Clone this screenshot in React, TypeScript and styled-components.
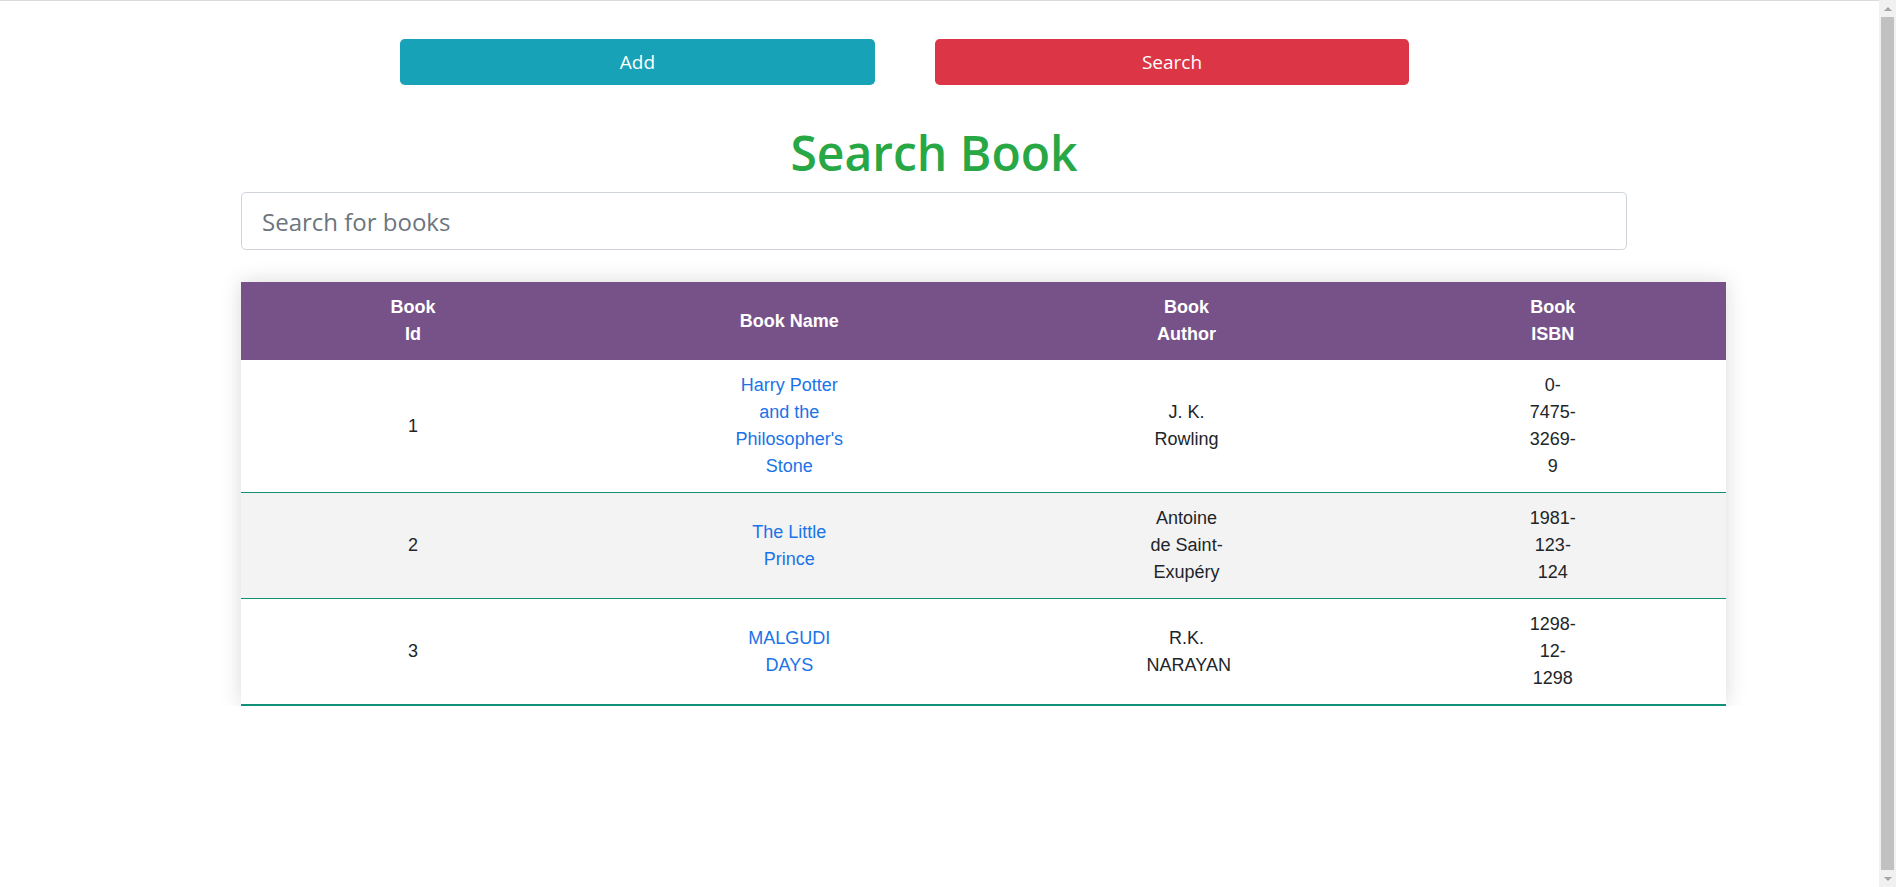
import React from "react";
import styled, { createGlobalStyle } from "styled-components";

const GlobalStyle = createGlobalStyle`
  html, body {
    margin: 0;
    padding: 0;
    background: #ffffff;
  }
  body {
    font-family: "Segoe UI", "Open Sans", "Noto Sans", sans-serif;
    color: #212529;
  }
`;

const Page = styled.div`
  border-top: 1px solid #dadada;
  box-sizing: border-box;
`;

const Container = styled.main`
  padding-left: 241px;
`;

const ButtonRow = styled.div`
  display: flex;
  gap: 60px;
  margin: 38px 0 0 159px;
`;

const ActionButton = styled.button<{ $bg: string; $w: number }>`
  width: ${(p) => p.$w}px;
  height: 46px;
  border: none;
  border-radius: 4.8px;
  background: ${(p) => p.$bg};
  color: #ffffff;
  font-family: "Segoe UI", "Open Sans", "Noto Sans", sans-serif;
  font-size: 19px;
  line-height: 30px;
  padding: 8px 16px;
  cursor: pointer;
`;

const Title = styled.h1`
  width: 1386px;
  margin: 39px 0 0;
  text-align: center;
  font-size: 48px;
  font-weight: 600;
  line-height: 58px;
  color: #28a745;
`;

const SearchInput = styled.input`
  display: block;
  box-sizing: border-box;
  width: 1386px;
  height: 58px;
  margin-top: 10px;
  padding: 10px 20px;
  font-family: "Segoe UI", "Open Sans", "Noto Sans", sans-serif;
  font-size: 24px;
  line-height: 36px;
  color: #495057;
  border: 1px solid #ced4da;
  border-radius: 4.8px;
  outline: none;
  &::placeholder {
    color: #6c757d;
  }
`;

const BookTable = styled.table`
  margin-top: 32px;
  width: 1485px;
  border-collapse: collapse;
  table-layout: fixed;
  box-shadow: 0 0 20px rgba(0, 0, 0, 0.15);
  font-family: "Liberation Sans", Arial, sans-serif;
  font-size: 18px;
  line-height: 27px;
`;

const Col = styled.col<{ $w: number }>`
  width: ${(p) => p.$w}px;
`;

const HeadRow = styled.tr`
  background: #775289;
  color: #ffffff;
`;

const HeadCell = styled.th`
  padding: 12px 0;
  text-align: center;
  vertical-align: middle;
  font-weight: 700;
`;

const BodyRow = styled.tr`
  border-bottom: 1px solid #12917a;
  &:nth-of-type(even) {
    background: #f3f3f3;
  }
  &:last-of-type {
    border-bottom: 2px solid #12917a;
  }
`;

const BodyCell = styled.td`
  padding: 12px 0;
  text-align: center;
  vertical-align: middle;
  color: #212529;
`;

const CellText = styled.div<{ $w: number }>`
  width: ${(p) => p.$w}px;
  margin: 0 auto;
`;

const BookLink = styled.a`
  color: #1a73e8;
  text-decoration: none;
`;

/* Window scrollbar drawn over the page's right edge, as in the screenshot */
const ScrollTrack = styled.div`
  position: fixed;
  top: 0;
  right: 0;
  bottom: 0;
  width: 17px;
  background: #f1f1f1;
  display: flex;
  flex-direction: column;
  align-items: center;
`;

const ScrollArrow = styled.div<{ $dir: "up" | "down" }>`
  flex: 0 0 17px;
  width: 17px;
  display: flex;
  align-items: center;
  justify-content: center;
  &::before {
    content: "";
    width: 0;
    height: 0;
    border-left: 4px solid transparent;
    border-right: 4px solid transparent;
    ${(p) =>
      p.$dir === "up"
        ? "border-bottom: 4px solid #a3a3a3;"
        : "border-top: 4px solid #a3a3a3;"}
  }
`;

const ScrollThumb = styled.div`
  flex: 1;
  width: 13px;
  margin: 0 0 0 2px;
  align-self: flex-start;
  background: #c1c1c1;
`;

const columns = [
  { w: 344, content: 54, label: "Book Id" },
  { w: 408, content: 120, label: "Book Name" },
  { w: 386, content: 80, label: "Book Author" },
  { w: 346, content: 54, label: "Book ISBN" },
];

const books = [
  { id: 1, name: "Harry Potter and the Philosopher's Stone", author: "J. K. Rowling", isbn: "0-7475-3269-9" },
  { id: 2, name: "The Little Prince", author: "Antoine de Saint-Exupéry", isbn: "1981-123-124" },
  { id: 3, name: "MALGUDI DAYS", author: "R.K. NARAYAN", isbn: "1298-12-1298" },
];

export default function App() {
  return (
    <>
      <GlobalStyle />
      <Page>
        <Container>
          <ButtonRow>
            <ActionButton $bg="#17a2b8" $w={475}>Add</ActionButton>
            <ActionButton $bg="#dc3545" $w={474}>Search</ActionButton>
          </ButtonRow>
          <Title>Search Book</Title>
          <SearchInput type="text" placeholder="Search for books" />
          <BookTable>
            <colgroup>
              {columns.map((c) => (
                <Col key={c.label} $w={c.w} />
              ))}
            </colgroup>
            <thead>
              <HeadRow>
                {columns.map((c) => (
                  <HeadCell key={c.label}>
                    <CellText $w={c.content}>{c.label}</CellText>
                  </HeadCell>
                ))}
              </HeadRow>
            </thead>
            <tbody>
              {books.map((b) => (
                <BodyRow key={b.id}>
                  <BodyCell>
                    <CellText $w={columns[0].content}>{b.id}</CellText>
                  </BodyCell>
                  <BodyCell>
                    <CellText $w={columns[1].content}>
                      <BookLink href="#">{b.name}</BookLink>
                    </CellText>
                  </BodyCell>
                  <BodyCell>
                    <CellText $w={columns[2].content}>{b.author}</CellText>
                  </BodyCell>
                  <BodyCell>
                    <CellText $w={columns[3].content}>{b.isbn}</CellText>
                  </BodyCell>
                </BodyRow>
              ))}
            </tbody>
          </BookTable>
        </Container>
      </Page>
      <ScrollTrack aria-hidden="true">
        <ScrollArrow $dir="up" />
        <ScrollThumb />
        <ScrollArrow $dir="down" />
      </ScrollTrack>
    </>
  );
}
